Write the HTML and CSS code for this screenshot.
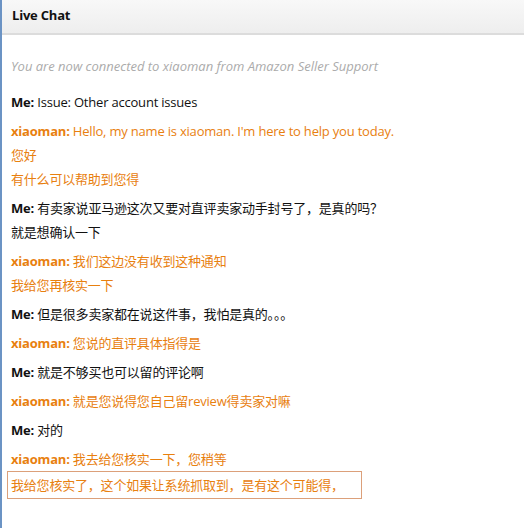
FILE: index.html
```html
<!DOCTYPE html>
<html lang="en">
<head>
    <meta charset="UTF-8">
    <title>Live Chat</title>
    <link rel="stylesheet" href="styles.css">
</head>
<body>
    <div class="chat-window">
        <div class="chat-header">Live Chat</div>

        <div class="chat-body">
            <p class="system-note">You are now connected to xiaoman from Amazon Seller Support</p>

            <div class="msg me"><b>Me:</b> Issue: Other account issues</div>
            <div class="msg agent"><b>xiaoman:</b> Hello, my name is xiaoman. I'm here to help you today.<br>您好<br>有什么可以帮助到您得</div>
            <div class="msg me"><b>Me:</b> 有卖家说亚马逊这次又要对直评卖家动手封号了，是真的吗？<br>就是想确认一下</div>
            <div class="msg agent"><b>xiaoman:</b> 我们这边没有收到这种通知<br>我给您再核实一下</div>
            <div class="msg me"><b>Me:</b> 但是很多卖家都在说这件事，我怕是真的。。。</div>
            <div class="msg agent"><b>xiaoman:</b> 您说的直评具体指得是</div>
            <div class="msg me"><b>Me:</b> 就是不够买也可以留的评论啊</div>
            <div class="msg agent"><b>xiaoman:</b> 就是您说得您自己留review得卖家对嘛</div>
            <div class="msg me"><b>Me:</b> 对的</div>
            <div class="msg agent"><b>xiaoman:</b> 我去给您核实一下，您稍等</div>
            <div class="typing-box">我给您核实了，这个如果让系统抓取到，是有这个可能得，</div>
        </div>
    </div>
</body>
</html>
```

FILE: styles.css
```css
body {
    margin: 0;
    background: #ffffff;
    font-family: "Open Sans", "Noto Sans CJK SC", sans-serif;
    font-size: 13px;
    letter-spacing: -0.2px;
}

.chat-window {
    border-left: 2px solid #6b93c4;
    height: 528px;
    overflow: hidden;
}

.chat-header {
    height: 33px;
    line-height: 31px;
    padding-left: 10px;
    font-weight: bold;
    color: #111;
    background: linear-gradient(to bottom, #f8f8f8, #eeeeee);
    border-bottom: 2px solid #dcdcdc;
}

.chat-body {
    padding: 16px 9px 0 9px;
}

.system-note {
    margin: 0 0 9px 0;
    line-height: 30px;
    font-style: italic;
    letter-spacing: 0;
    color: #ababab;
}

.msg {
    line-height: 24px;
    margin-bottom: 5px;
    color: #111;
}

.msg.agent {
    color: #e8800f;
}

.typing-box {
    width: 347px;
    margin-left: -4px;
    margin-top: -5px;
    padding: 1px 3px;
    line-height: 24px;
    border: 1px solid #dca07a;
    color: #e8800f;
}
```
